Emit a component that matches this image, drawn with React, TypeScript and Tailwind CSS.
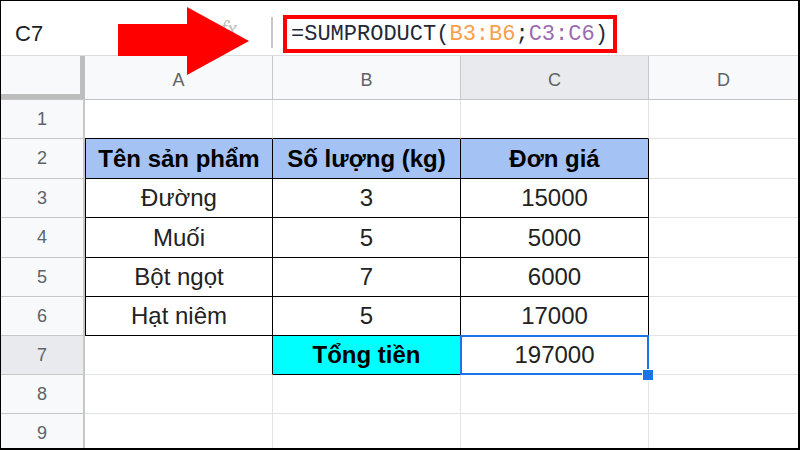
import React from "react";

const GRID = "border-[#e2e3e3]";

type Cell = {
  text?: string;
  cls: string; // border + background for this cell
  bold?: boolean;
  selected?: boolean;
};

type Row = { n: number; h: string; active?: boolean; cells: Cell[] };

const D = { cls: "border-b border-[#e2e3e3]" };

const rows: Row[] = [
  {
    n: 1,
    h: "h-[39px]",
    cells: [
      { cls: "border-r border-b border-r-[#e2e3e3] border-b-black" },
      { cls: "border-r border-b border-r-[#e2e3e3] border-b-black" },
      { cls: "border-r border-b border-r-[#e2e3e3] border-b-black" },
      D,
    ],
  },
  {
    n: 2,
    h: "h-[40px]",
    cells: [
      { text: "Tên sản phẩm", bold: true, cls: "border-l border-r border-b border-black bg-[#a4c2f4]" },
      { text: "Số lượng (kg)", bold: true, cls: "border-r border-b border-black bg-[#a4c2f4]" },
      { text: "Đơn giá", bold: true, cls: "border-r border-b border-black bg-[#a4c2f4]" },
      D,
    ],
  },
  {
    n: 3,
    h: "h-[39px]",
    cells: [
      { text: "Đường", cls: "border-l border-r border-b border-black" },
      { text: "3", cls: "border-r border-b border-black" },
      { text: "15000", cls: "border-r border-b border-black" },
      D,
    ],
  },
  {
    n: 4,
    h: "h-[40px]",
    cells: [
      { text: "Muối", cls: "border-l border-r border-b border-black" },
      { text: "5", cls: "border-r border-b border-black" },
      { text: "5000", cls: "border-r border-b border-black" },
      D,
    ],
  },
  {
    n: 5,
    h: "h-[39px]",
    cells: [
      { text: "Bột ngọt", cls: "border-l border-r border-b border-black" },
      { text: "7", cls: "border-r border-b border-black" },
      { text: "6000", cls: "border-r border-b border-black" },
      D,
    ],
  },
  {
    n: 6,
    h: "h-[39px]",
    cells: [
      { text: "Hạt niêm", cls: "border-l border-r border-b border-black" },
      { text: "5", cls: "border-r border-b border-black" },
      { text: "17000", cls: "border-r border-b border-black" },
      D,
    ],
  },
  {
    n: 7,
    h: "h-[39px]",
    active: true,
    cells: [
      { cls: "border-r border-b border-r-black border-b-[#e2e3e3]" },
      { text: "Tổng tiền", bold: true, cls: "border-r border-b border-black bg-[#00ffff]" },
      { text: "197000", selected: true, cls: "border-r border-b border-black" },
      D,
    ],
  },
  {
    n: 8,
    h: "h-[39px]",
    cells: [
      { cls: `border-r border-b ${GRID}` },
      { cls: `border-r border-b ${GRID}` },
      { cls: `border-r border-b ${GRID}` },
      D,
    ],
  },
  {
    n: 9,
    h: "h-[39px]",
    cells: [
      { cls: `border-r border-b ${GRID}` },
      { cls: `border-r border-b ${GRID}` },
      { cls: `border-r border-b ${GRID}` },
      D,
    ],
  },
];

const widths = ["w-[188px]", "w-[188px]", "w-[188px]", "flex-1"];

function Arrow() {
  return (
    <svg
      className="absolute left-[117px] top-[6px] z-20"
      width="131"
      height="68"
      viewBox="0 0 131 68"
    >
      <polygon points="0,17 69,17 69,0 131,34 69,68 69,49 0,49" fill="#ff0000" />
    </svg>
  );
}

export default function App() {
  return (
    <div
      className="relative h-[450px] w-[800px] overflow-hidden border-t border-l border-r-2 border-b-2 border-black bg-white"
      style={{ fontFamily: '"Liberation Sans", Arial, sans-serif' }}
    >
      <Arrow />

      {/* thanh công thức */}
      <div className="flex h-[55px] items-start border-b border-[#dadce0]">
        <div className="mt-[16px] w-[220px] pl-[14px] text-[22px] text-[#202124]">C7</div>
        <div className="mt-[12px] w-[30px] font-serif text-[22px] italic text-[#c4c4c4]">fx</div>
        <div className="ml-[20px] mt-[16px] h-[31px] w-[2px] bg-[#c7c7c7]" />
        <div
          className="ml-[10px] mt-[14px] flex h-[38px] w-[334px] items-center border-4 border-[#ff0000] pl-[4px] text-[22px] text-[#1f2937]"
          style={{ fontFamily: '"Liberation Mono", "DejaVu Sans Mono", monospace' }}
        >
          <span>=SUMPRODUCT(</span>
          <span className="text-[#f6a04d]">B3:B6</span>
          <span>;</span>
          <span className="text-[#9b6bb0]">C3:C6</span>
          <span>)</span>
        </div>
      </div>

      {/* tiêu đề cột */}
      <div className="flex h-[44px] border-b border-[#c4c4c4] bg-[#f8f9fa] text-[18px] text-[#5f6368]">
        <div className="w-[84px] border-r-[5px] border-b-[5px] border-[#bdbdbd] bg-[#f8f9fa]" />
        {["A", "B", "C", "D"].map((c, i) => (
          <div
            key={c}
            className={`flex items-center justify-center pt-[6px] ${widths[i]} ${
              i < 3 ? "border-r border-[#c7c7c7]" : ""
            } ${c === "C" ? "bg-[#e8eaed]" : ""}`}
          >
            {c}
          </div>
        ))}
      </div>

      {/* các dòng */}
      {rows.map((r) => (
        <div key={r.n} className={`flex ${r.h}`}>
          <div
            className={`flex w-[84px] items-center justify-center border-r-2 border-b border-[#c7c7c7] text-[18px] text-[#5f6368] ${
              r.active ? "bg-[#e8eaed]" : "bg-[#f8f9fa]"
            }`}
          >
            {r.n}
          </div>
          {r.cells.map((c, i) => (
            <div
              key={i}
              className={`relative flex items-center justify-center text-[24px] ${widths[i]} ${c.cls} ${
                c.bold ? "font-bold text-black" : "text-[#222222]"
              }`}
            >
              {c.text}
              {c.selected ? (
                <>
                  <div className="absolute -top-px -left-px -right-px -bottom-px border-2 border-[#1a73e8]" />
                  <div className="absolute -right-[6px] -bottom-[7px] z-10 h-[12px] w-[12px] border border-white bg-[#1a73e8]" />
                </>
              ) : null}
            </div>
          ))}
        </div>
      ))}
    </div>
  );
}
